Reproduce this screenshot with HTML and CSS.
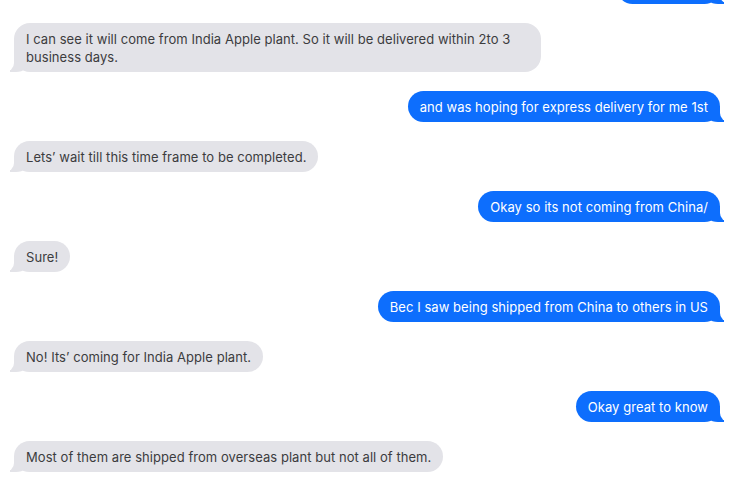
FILE: index.html
```html
<!DOCTYPE html>
<html>
<head>
<meta charset="utf-8">
<link rel="stylesheet" href="styles.css">
</head>
<body>
<div class="chat">
  <div class="row me"><div class="bubble sent">Thanks a lot!</div></div>
  <div class="row them"><div class="bubble recv">I can see it will come from India Apple plant. So it will be delivered within 2to 3 business days.</div></div>
  <div class="row me"><div class="bubble sent">and was hoping for express delivery for me 1st</div></div>
  <div class="row them"><div class="bubble recv">Lets’ wait till this time frame to be completed.</div></div>
  <div class="row me"><div class="bubble sent">Okay so its not coming from China/</div></div>
  <div class="row them"><div class="bubble recv">Sure!</div></div>
  <div class="row me"><div class="bubble sent">Bec I saw being shipped from China to others in US</div></div>
  <div class="row them"><div class="bubble recv">No! Its’ coming for India Apple plant.</div></div>
  <div class="row me"><div class="bubble sent">Okay great to know</div></div>
  <div class="row them"><div class="bubble recv">Most of them are shipped from overseas plant but not all of them.</div></div>
</div>
</body>
</html>
```
FILE: styles.css
```css
html, body {
  margin: 0;
  padding: 0;
  background: #fff;
  overflow: hidden;
}
body {
  font-family: Inter, "Noto Sans", sans-serif;
  font-size: 13px;
  letter-spacing: 0.05px;
}
.chat {
  display: flex;
  flex-direction: column;
  gap: 19px;
  padding: 0 17px 0 14px;
  margin-top: -27px;
}
.row {
  display: flex;
}
.row.me { justify-content: flex-end; }
.row.them { justify-content: flex-start; }
.bubble {
  position: relative;
  z-index: 0;
  max-width: 503px;
  padding: 6.5px 12px;
  line-height: 18px;
  border-radius: 16px;
}
.sent {
  background: #0d6efd;
  color: #fff;
}
.recv {
  background: #e3e3e8;
  color: #3c3c3e;
}
.bubble::before,
.bubble::after {
  content: "";
  position: absolute;
  bottom: 0;
  z-index: -1;
}
.sent::before {
  right: -4px;
  width: 20px;
  height: 16px;
  background: #0d6efd;
  border-bottom-left-radius: 14px 12px;
}
.sent::after {
  right: -10px;
  width: 10px;
  height: 18px;
  background: #fff;
  border-bottom-left-radius: 9px;
}
.recv::before {
  left: -4px;
  width: 20px;
  height: 16px;
  background: #e3e3e8;
  border-bottom-right-radius: 14px 12px;
}
.recv::after {
  left: -10px;
  width: 10px;
  height: 18px;
  background: #fff;
  border-bottom-right-radius: 9px;
}
```
